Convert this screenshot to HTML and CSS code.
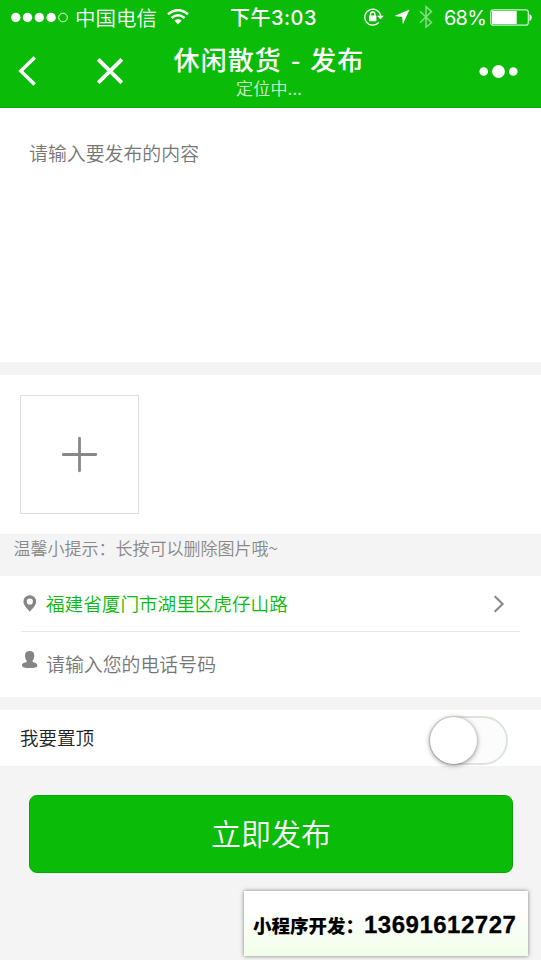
FILE: index.html
```
<!DOCTYPE html>
<html lang="zh-CN">
<head>
<meta charset="utf-8">
<title>休闲散货 - 发布</title>
<link rel="stylesheet" href="styles.css">
</head>
<body>
<header class="header">
  <div class="status">
    <svg class="signal" width="58" height="12" viewBox="0 0 58 12"><g fill="#fff"><circle cx="4.8" cy="5.500" r="4.7"/><circle cx="16.5" cy="5.500" r="4.7"/><circle cx="28.3" cy="5.500" r="4.7"/><circle cx="40.1" cy="5.500" r="4.7"/></g><circle cx="52" cy="5.500" r="4.3" fill="none" stroke="#fff" stroke-width=".9"/></svg>
    <span class="carrier">中国电信</span>
    <svg class="wifi" width="22" height="16" viewBox="0 0 22 16"><g fill="none" stroke="#fff" stroke-width="2.5"><path d="M1 5.2Q11-3 21 5.2"/><path d="M4.5 9Q11 3.4 17.5 9"/></g><path d="M7.3 11.6Q11 8.4 14.7 11.6L11 15.5z" fill="#fff"/></svg>
    <span class="time">下午3:03</span>
    <svg class="lock" width="20" height="18" viewBox="0 0 20 18"><g fill="none" stroke="#fff" stroke-width="1.3"><path d="M14.8 14.5A8 8 0 1 1 16.7 8"/><path d="M6.5 8V6.2a2.2 2.2 0 0 1 4.4 0V8" stroke-width="1.4"/></g><rect x="5" y="7.6" width="7.4" height="5.6" rx=".6" fill="#fff"/><path d="M13.2 7.8h6.6l-3.3 3.8z" fill="#fff"/></svg>
    <svg class="arrow" width="16" height="16" viewBox="0 0 16 16"><path d="M15.5.5L8.8 15.5 8.2 8 .4 7.1z" fill="#fff"/></svg>
    <svg class="bluetooth" width="14" height="24" viewBox="0 0 14 24"><path d="M1 6.2L12.5 17.5 7 22.2V1.6L12.5 6.6 1 17.7" fill="none" stroke="#fff" stroke-width="1.5" opacity=".5"/></svg>
    <span class="percent">68%</span>
    <svg class="battery" width="42" height="17" viewBox="0 0 42 17"><rect x=".8" y=".8" width="37.5" height="15.4" rx="2.5" fill="none" stroke="#fff" stroke-width="1.2" opacity=".8"/><path d="M2 2h24.7v13H2z" fill="#fff"/><path d="M39.5 5q2.3 1 2.3 3.5t-2.3 3.5z" fill="#fff"/></svg>
  </div>
  <nav class="nav">
    <svg class="back" width="20" height="30" viewBox="0 0 20 30"><path d="M16.7 1.4L2.8 15l13.9 13.6" fill="none" stroke="#fff" stroke-width="3.5"/></svg>
    <svg class="close" width="26" height="26" viewBox="0 0 26 26"><path d="M1.2 1.4l23.6 23.4M24.8 1.4L1.2 24.8" stroke="#fff" stroke-width="3.8"/></svg>
    <div class="heading"><h1 class="title">休闲散货 - 发布</h1><p class="subtitle">定位中...</p></div>
    <svg class="more" width="40" height="14" viewBox="0 0 40 14" fill="#fff"><circle cx="4.7" cy="7.500" r="4.3"/><circle cx="19.5" cy="7.500" r="6.4"/><circle cx="34.3" cy="7.500" r="4.3"/></svg>
  </nav>
</header>
<main>
  <section class="content"><p class="placeholder">请输入要发布的内容</p></section>
  <section class="photos">
    <div class="add"><svg width="36" height="36" viewBox="0 0 36 36"><path d="M17.500 1.200v32.600M1.200 17.500h32.600" stroke="#888" stroke-width="2.8" stroke-linecap="round"/></svg></div>
  </section>
  <p class="hint">温馨小提示：长按可以删除图片哦~</p>
  <section class="contact">
    <div class="row location">
      <svg class="pin" width="14" height="18" viewBox="0 0 14 18"><path fill="#858585" fill-rule="evenodd" d="M6.800.3A6.300 6.300 0 0 0 .4 6.600c0 3.800 3.900 7.200 6.400 10.100 2.500-2.900 6.400-6.300 6.400-10.100A6.300 6.300 0 0 0 6.800.3zM6.800 3.400a3.100 3.100 0 1 1 0 6.200 3.100 3.100 0 0 1 0-6.200z"/></svg>
      <span class="address">福建省厦门市湖里区虎仔山路</span>
      <svg class="chevron" width="12" height="18" viewBox="0 0 12 18"><path d="M1.700 1.300L9.600 9l-7.900 7.700" fill="none" stroke="#888" stroke-width="2.100"/></svg>
    </div>
    <div class="row phone">
      <svg class="person" width="16" height="18" viewBox="0 0 16 18"><path fill="#858585" d="M7.600.1C10.900.1 12.500 2 12.300 5c-.1 2.300-.9 3.800-1.700 4.800v1.300c2.200.7 4.700 1.100 4.700 3.300 0 2-3.200 2.500-7.700 2.500S0 16.400 0 14.400c0-2.200 2.500-2.600 4.700-3.300V9.800C3.900 8.800 3.100 7.300 3 5 2.900 2 4.400.1 7.600.1z"/></svg>
      <span class="placeholder">请输入您的电话号码</span>
    </div>
  </section>
  <section class="pin-top"><span class="pin-label">我要置顶</span><div class="switch"><div class="knob"></div></div></section>
  <button class="submit">立即发布</button>
</main>
<aside class="ad"><span class="ad-label">小程序开发：</span><span class="ad-number">13691612727</span></aside>
</body>
</html>
```
FILE: styles.css
```
* { box-sizing: border-box; }
body { margin: 0; width: 541px; height: 960px; overflow: hidden; background: #f4f4f4; font: 350 18.900px/28px "Noto Sans CJK SC", sans-serif; color: #333; }
h1, p { margin: 0; }
svg { display: block; flex: none; }
span { white-space: nowrap; }

.header { height: 108px; background: #0abb08; color: #fff; border-bottom: 1px solid #08ad08; }
.status { display: flex; align-items: center; height: 35px; padding-left: 11px; }
.carrier { width: 92px; padding: 0 0 2px 6px; font-size: 20.5px; }
.wifi { margin: 0 0 2px 6px; }
.time { width: 133px; padding-left: 41px; font: 500 20px/28px Inter, "Noto Sans CJK SC", sans-serif; letter-spacing: .5px; }
.lock { margin: 0 0 2px 42px; }
.arrow { margin: 0 0 1px 10px; }
.bluetooth { margin: 0 0 1px 9px; }
.percent { width: 46px; margin-left: 11px; font: 400 20px/28px Inter, sans-serif; letter-spacing: -.8px; }
.battery { margin-bottom: 1px; }
.nav { display: flex; align-items: center; height: 72px; padding: 0 22px 0 18px; }
.close { margin-left: 59px; }
.heading { width: 292px; text-align: center; }
.title { font-size: 26px; line-height: 34px; font-weight: 500; letter-spacing: 1.100px; word-spacing: 2px; }
.subtitle { font-size: 17px; line-height: 24px; opacity: .8; letter-spacing: .2px; }
.more { margin-left: auto; }

.content { height: 254px; padding: 31px 29px; background: #fff; }
.placeholder { color: #777; }
.photos { height: 159px; margin-top: 13px; padding: 20px; background: #fff; }
.add { display: flex; align-items: center; justify-content: center; width: 119px; height: 119px; border: 1px solid #ddd; }
.hint { height: 42px; padding-left: 13.500px; font-size: 17px; line-height: 28px; color: #888; }
.contact { height: 121px; padding: 0 21px; background: #fff; }
.row { display: flex; align-items: center; }
.location { height: 56px; border-bottom: 1px solid #e8e8e8; }
.pin { margin-left: 2px; }
.address { margin: 0 0 2px 9px; font-size: 18.600px; color: #0abb08; }
.chevron { margin: 0 15px 0 auto; }
.phone { height: 65px; }
.person { margin: 0 0 10px 1px; }
.phone .placeholder { margin: 0 0 2px 8px; }
.pin-top { display: flex; align-items: center; justify-content: space-between; height: 56px; margin-top: 13px; padding: 0 33px 0 20px; background: #fff; font-size: 18.500px; color: #222; }
.pin-label { padding-bottom: 2px; }
.switch { width: 79px; height: 49px; margin-top: 4px; border: 2px solid #dce5dc; border-radius: 25px; background: #fcfcfc; }
.knob { width: 47px; height: 47px; margin: -1px; border-radius: 50%; background: #fff; box-shadow: 0 1px 5px rgba(0,0,0,.5); }
.submit { display: block; width: 484px; height: 78px; margin: 29px 0 0 29px; padding: 0 0 4px; border: 1px solid #0aa50a; border-radius: 8px; background: #0abb08; color: #fff; font: 350 30px/72px "Noto Sans CJK SC", sans-serif; }
.ad { display: flex; align-items: center; width: 284px; height: 65px; margin: 18px 0 0 244px; padding: 3px 0 0 9px; background: linear-gradient(#fff 25%, #f1fde9); box-shadow: 0 0 4px rgba(0,0,0,.5); color: #000; }
.ad-label { width: 111px; font-size: 18.500px; font-weight: 900; }
.ad-number { font: 700 24px/28px "Liberation Sans", sans-serif; letter-spacing: .5px; -webkit-text-stroke: .3px #000; }
```
